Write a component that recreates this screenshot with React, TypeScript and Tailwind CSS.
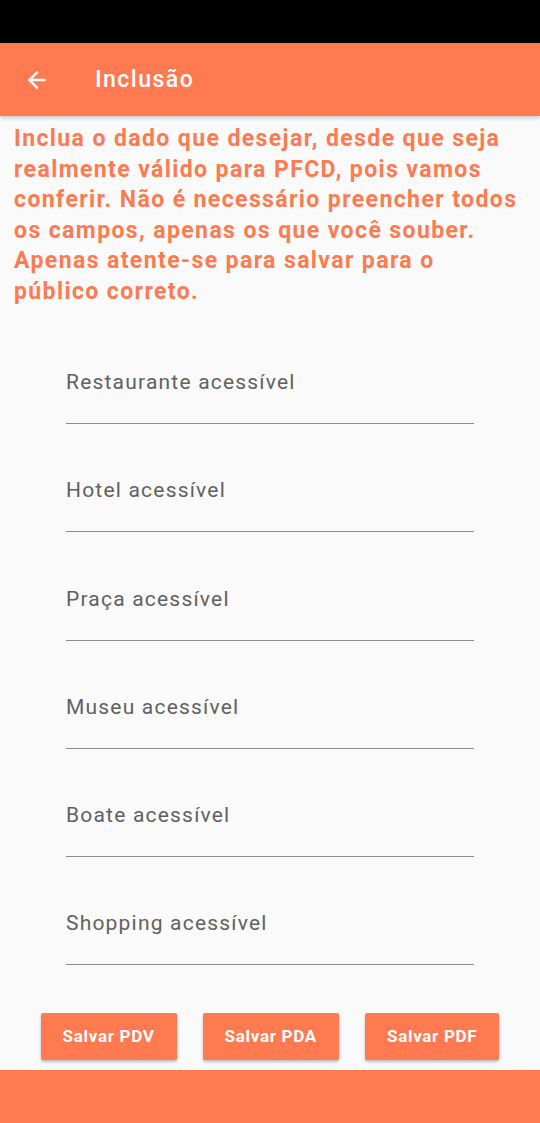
import { ArrowLeft } from 'lucide-react'

export default function App() {
  const fields = [
    'Restaurante acessível',
    'Hotel acessível',
    'Praça acessível',
    'Museu acessível',
    'Boate acessível',
    'Shopping acessível',
  ]

  const buttons = ['Salvar PDV', 'Salvar PDA', 'Salvar PDF']

  return (
    <div
      className="min-h-[1123px] w-[540px] flex flex-col bg-[#fafafa]"
      style={{ fontFamily: 'Roboto, "Noto Sans", sans-serif' }}
    >
      {/* Status bar */}
      <div className="h-[43px] bg-black" />

      {/* App bar */}
      <div className="h-[73px] bg-[#ff7a50] flex items-center shadow-[0_2px_4px_rgba(0,0,0,0.2)] z-10">
        <ArrowLeft className="ml-[24px] w-[26px] h-[26px] text-white" strokeWidth={2.2} />
        <h1 className="ml-[45px] text-white text-[23px] tracking-[1.5px] font-medium leading-none">
          Inclusão
        </h1>
      </div>

      {/* Info text */}
      <p className="mt-[8px] px-[14px] text-[#ff7a50] text-[23px] tracking-[1.4px] font-bold leading-[30.5px]">
        Inclua o dado que desejar, desde que seja realmente válido para PFCD, pois vamos
        conferir. Não é necessário preencher todos os campos, apenas os que você souber.
        Apenas atente-se para salvar para o público correto.
      </p>

      {/* Fields */}
      <div className="mt-[9px] flex flex-col px-[66px]">
        {fields.map((label) => (
          <div
            key={label}
            className="h-[108.2px] flex flex-col justify-end border-b border-[#8d8d8d]"
          >
            <span className="mb-[29px] text-[21px] tracking-[1.2px] leading-[24px] text-[#616161]">
              {label}
            </span>
          </div>
        ))}
      </div>

      {/* Buttons */}
      <div className="mt-[48px] flex justify-center gap-[26px]">
        {buttons.map((b) => (
          <button
            key={b}
            className="h-[47px] px-[22px] rounded-[2px] bg-[#ff7a50] text-white text-[17px] tracking-[0.7px] font-bold shadow-[0_2px_3px_rgba(0,0,0,0.25)]"
          >
            {b}
          </button>
        ))}
      </div>

      <div className="flex-1" />

      {/* Bottom bar */}
      <div className="h-[53px] bg-[#ff7a50]" />
    </div>
  )
}
